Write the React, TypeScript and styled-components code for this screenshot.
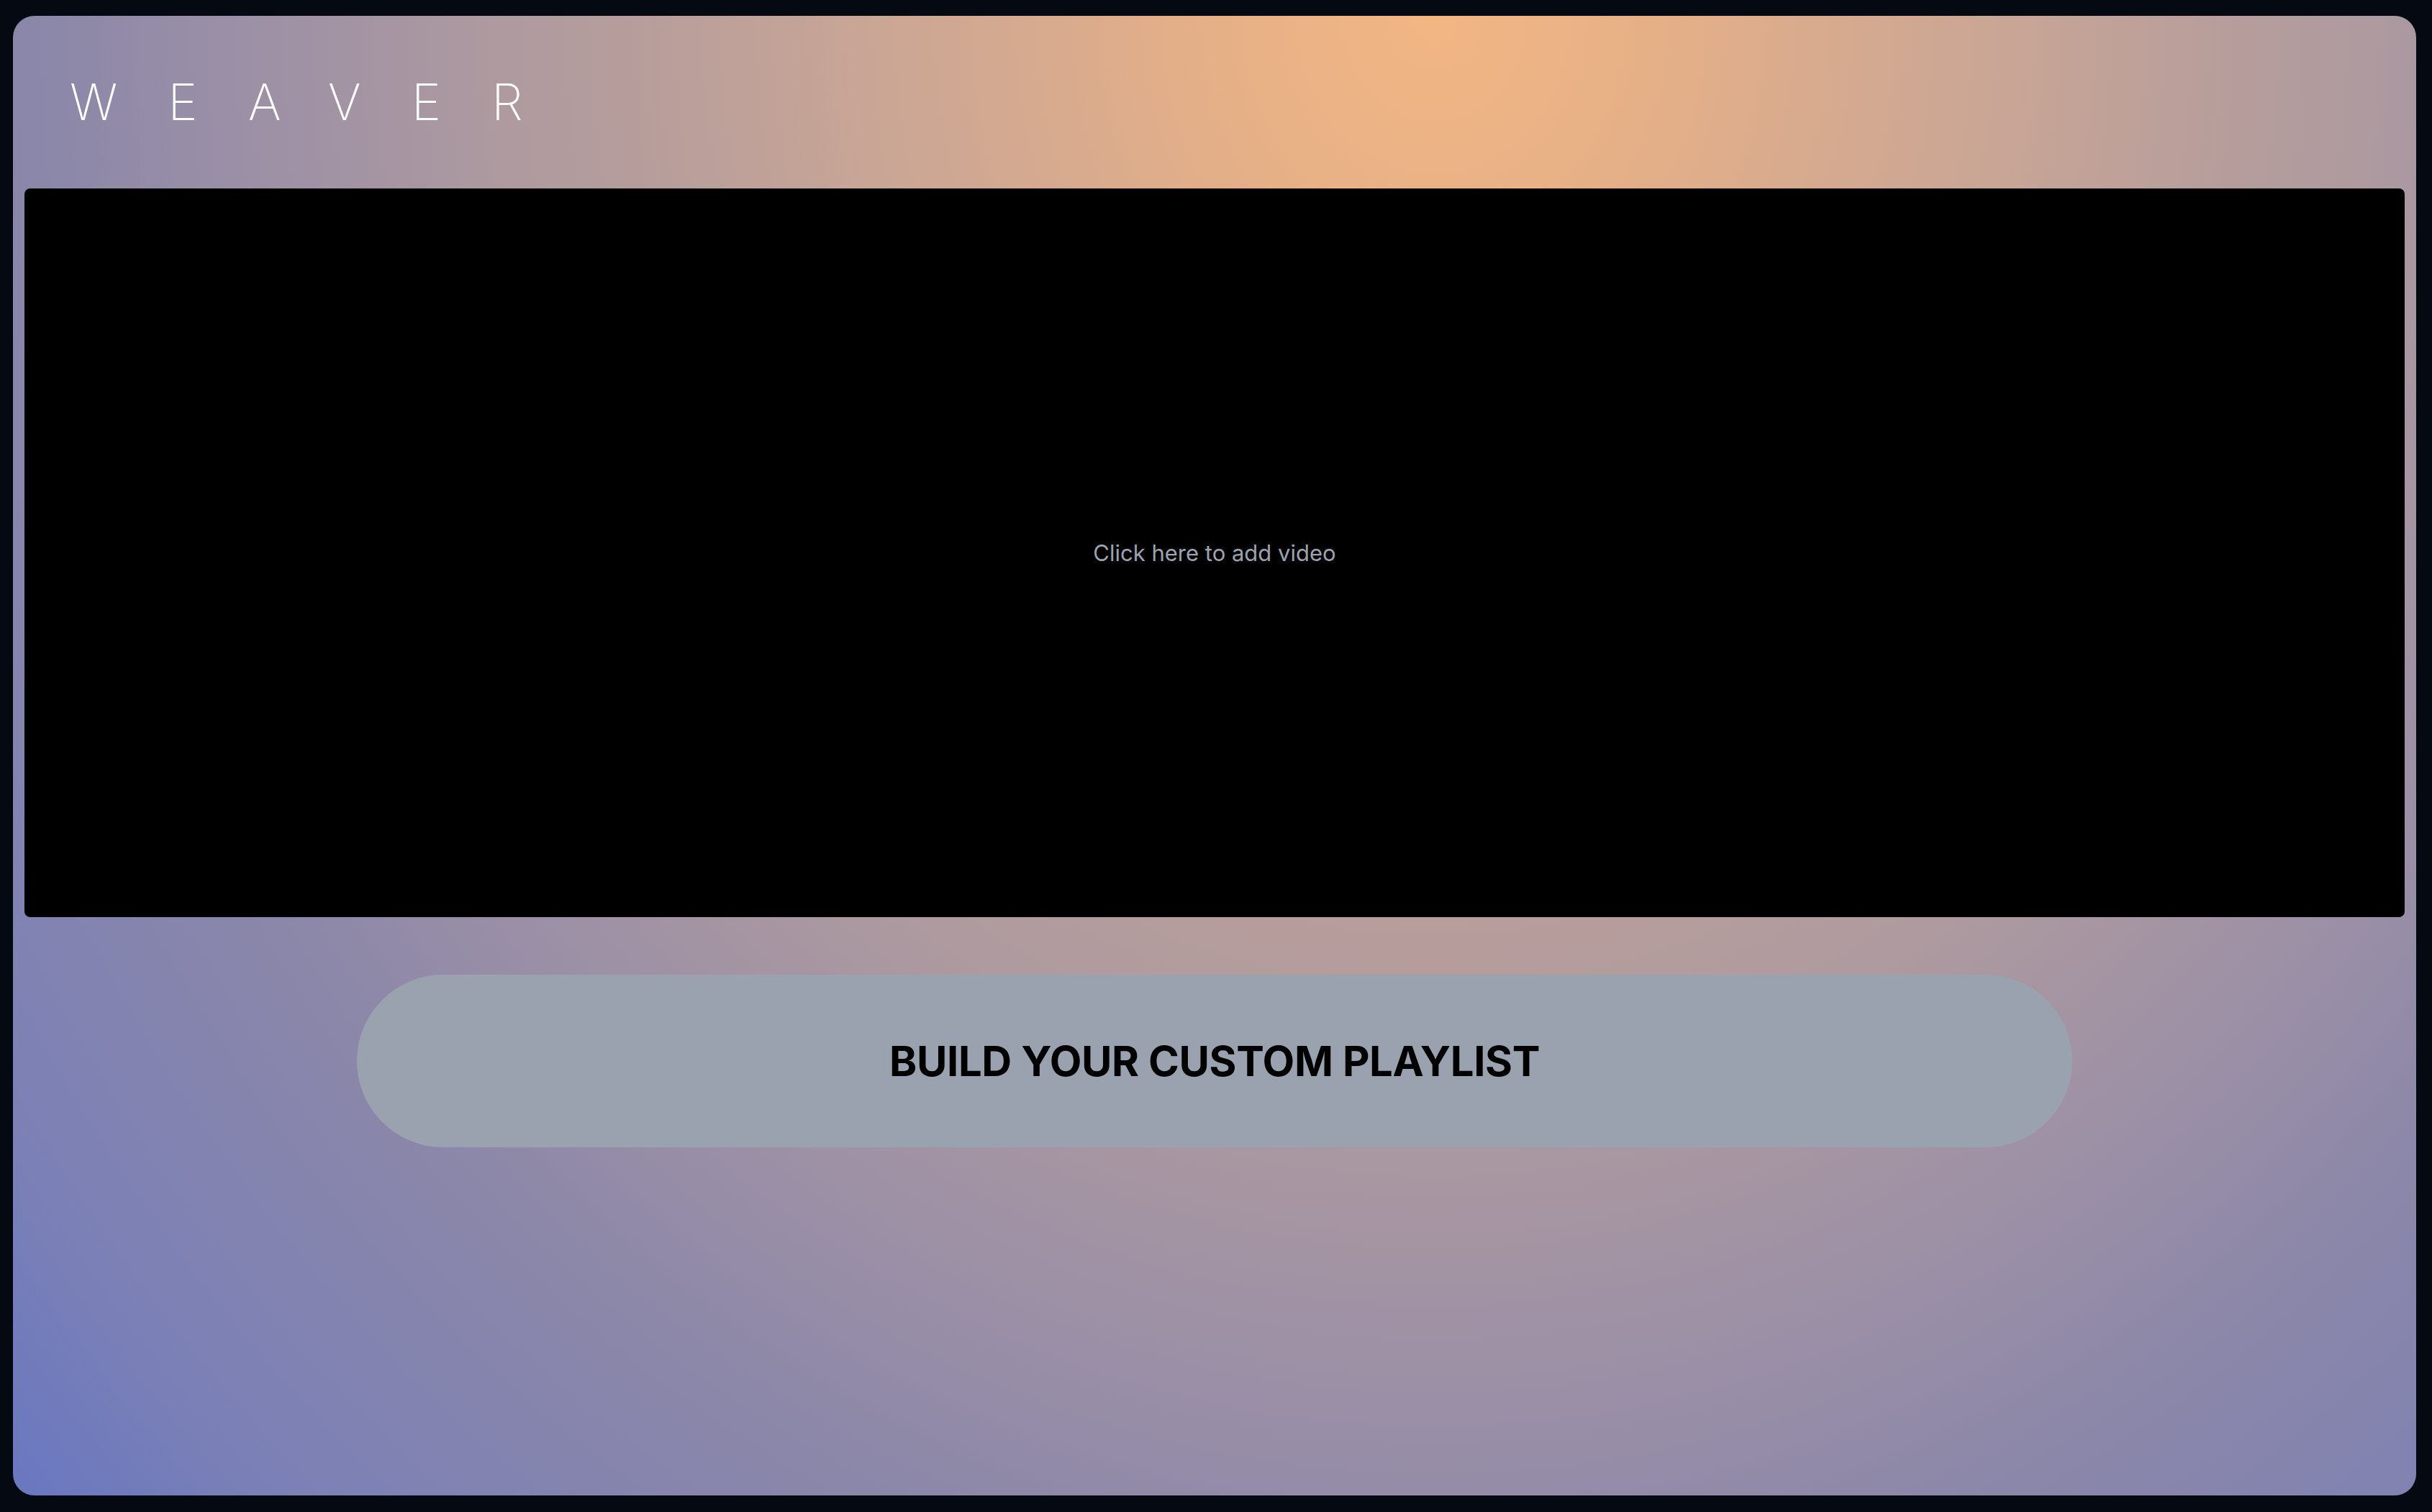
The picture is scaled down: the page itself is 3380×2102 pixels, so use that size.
import React from "react";
import styled, { createGlobalStyle } from "styled-components";

const GlobalStyle = createGlobalStyle`
  html, body {
    margin: 0;
    padding: 0;
    background: #040912;
  }
  body {
    font-family: Inter, "Noto Sans", "Liberation Sans", sans-serif;
  }
  * { box-sizing: border-box; }
`;

const Page = styled.div`
  width: 3380px;
  height: 2102px;
  padding: 22px 22px 23px 18px;
  background: #040912;
`;

const Card = styled.main`
  height: 100%;
  border-radius: 30px;
  padding: 0 16px;
  display: flex;
  flex-direction: column;
  align-items: stretch;
  background: radial-gradient(
    ellipse 2800px 3220px at 1975px 0px,
    #f2b683 0px,
    #e6b087 300px,
    #d6aa8f 560px,
    #c8a596 810px,
    #b89e9b 1080px,
    #ae9a9f 1300px,
    #9c90a6 1650px,
    #8b87a9 1940px,
    #7b80b6 2400px,
    #6a78c0 2650px,
    #6676c3 2800px
  );
`;

const Header = styled.header`
  height: 240px;
  display: flex;
  align-items: center;
  padding-left: 63px;
`;

const Logo = styled.h1`
  margin: 0;
  font-family: Inter, "Noto Sans", sans-serif;
  font-weight: 200;
  font-size: 70px;
  line-height: 1;
  letter-spacing: 70px;
  color: #ffffff;
`;

const VideoArea = styled.button`
  height: 1013px;
  width: 100%;
  border: none;
  border-radius: 8px;
  background: #000000;
  display: flex;
  align-items: center;
  justify-content: center;
  cursor: pointer;
  padding: 0;
`;

const VideoHint = styled.span`
  font-family: Inter, "Noto Sans", sans-serif;
  font-size: 31px;
  font-weight: 400;
  color: #9ca3af;
`;

const Actions = styled.div`
  display: flex;
  justify-content: center;
  padding-top: 80px;
`;

const PlaylistButton = styled.button`
  width: 2384px;
  height: 240px;
  border: none;
  border-radius: 120px;
  background: #9ba2af;
  color: #000000;
  font-family: Inter, "Noto Sans", sans-serif;
  font-weight: 700;
  font-size: 58px;
  letter-spacing: -0.4px;
  cursor: pointer;
`;

export default function App() {
  return (
    <>
      <GlobalStyle />
      <Page>
        <Card>
          <Header>
            <Logo>WEAVER</Logo>
          </Header>
          <VideoArea>
            <VideoHint>Click here to add video</VideoHint>
          </VideoArea>
          <Actions>
            <PlaylistButton>BUILD YOUR CUSTOM PLAYLIST</PlaylistButton>
          </Actions>
        </Card>
      </Page>
    </>
  );
}
